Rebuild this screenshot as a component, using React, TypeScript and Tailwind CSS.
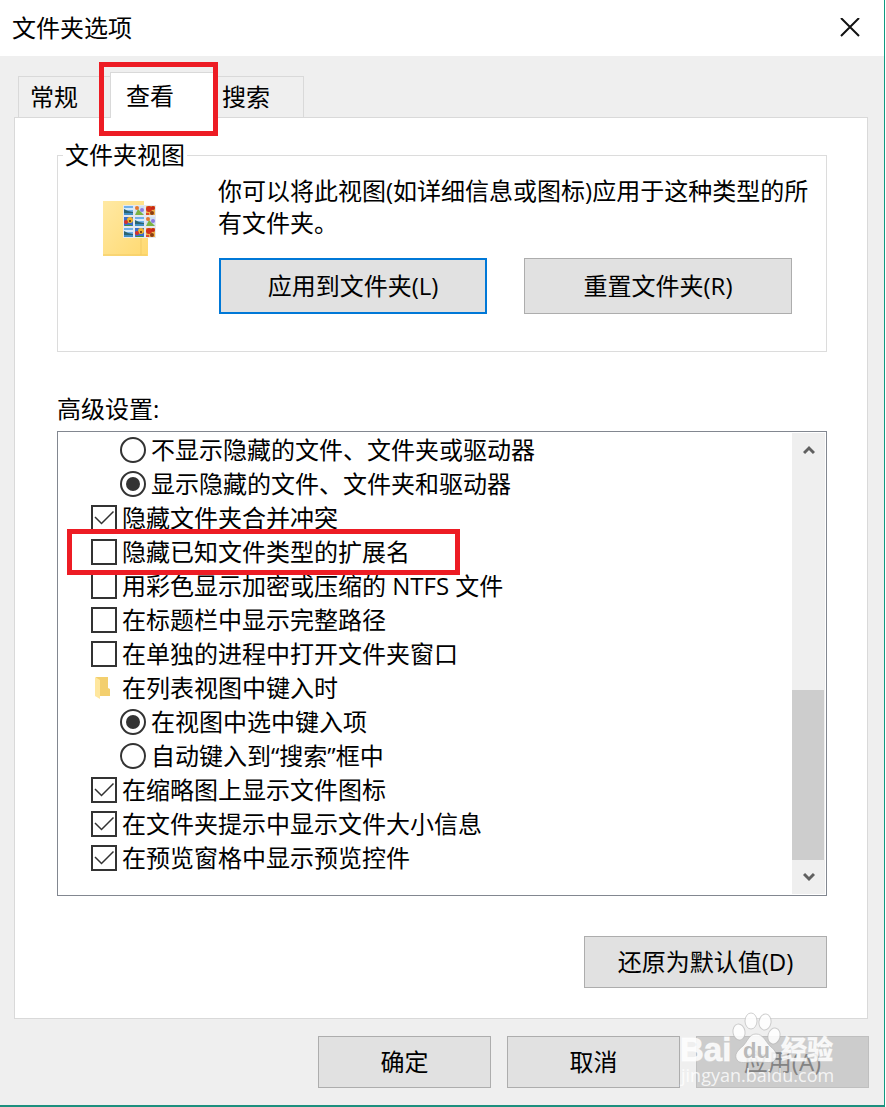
import React from 'react';

type Row = {
  kind: 'radio' | 'checkbox' | 'folder';
  label: string;
  group?: string;
  checked?: boolean;
  marked?: boolean;
};

const rows: Row[] = [
  { kind: 'radio', group: 'hidden-files', label: '不显示隐藏的文件、文件夹或驱动器' },
  { kind: 'radio', group: 'hidden-files', label: '显示隐藏的文件、文件夹和驱动器', checked: true },
  { kind: 'checkbox', label: '隐藏文件夹合并冲突', checked: true },
  { kind: 'checkbox', label: '隐藏已知文件类型的扩展名', marked: true },
  { kind: 'checkbox', label: '用彩色显示加密或压缩的 NTFS 文件' },
  { kind: 'checkbox', label: '在标题栏中显示完整路径' },
  { kind: 'checkbox', label: '在单独的进程中打开文件夹窗口' },
  { kind: 'folder', label: '在列表视图中键入时' },
  { kind: 'radio', group: 'typing', label: '在视图中选中键入项', checked: true },
  { kind: 'radio', group: 'typing', label: '自动键入到“搜索”框中' },
  { kind: 'checkbox', label: '在缩略图上显示文件图标', checked: true },
  { kind: 'checkbox', label: '在文件夹提示中显示文件大小信息', checked: true },
  { kind: 'checkbox', label: '在预览窗格中显示预览控件', checked: true },
];

const SmallFolder = () => (
  <svg width="26" height="26" viewBox="0 0 26 26" aria-hidden="true">
    <path d="M5 2h12v11l2 1v7H7z" fill="#f3cf6e" />
    <path d="M4 2l5 3v19l-5-3z" fill="#ffe79e" />
  </svg>
);

// one thumbnail of the 3x3 grid on the folder
const Thumb = ({ x, y, type }: { x: number; y: number; type: number }) => (
  <g transform={`translate(${x} ${y})`}>
    <rect width="11" height="11" fill="#e6e8ee" />
    {type === 0 && (
      <>
        <rect x="1" y="1" width="9" height="9" fill="#6fb0ea" />
        <path d="M1 3h9v2H1z" fill="#d5eafa" />
        <path d="M1 4l4 2 5 1v1H1z" fill="#2b6472" />
        <path d="M1 8h9v2H1z" fill="#3f8fc4" />
      </>
    )}
    {type === 1 && (
      <>
        <rect x="1" y="1" width="9" height="9" fill="#cfe0f2" />
        <path d="M1 10l3-6 3 3 3 3z" fill="#7cb342" />
        <circle cx="3" cy="3" r="2" fill="#e8762c" />
        <circle cx="8" cy="5" r="2" fill="#8c7ae0" />
      </>
    )}
    {type === 2 && (
      <>
        <rect x="1" y="1" width="9" height="9" fill="#efb04a" />
        <circle cx="4" cy="4" r="3" fill="#d3301c" />
        <circle cx="8" cy="3" r="2" fill="#c62817" />
        <circle cx="7" cy="8" r="2" fill="#8b3d12" />
        <path d="M1 8h3v2H1z" fill="#e0492c" />
      </>
    )}
    {type === 3 && (
      <>
        <rect x="1" y="1" width="9" height="9" fill="#3c6ec9" />
        <circle cx="7" cy="4" r="3" fill="#f0b429" />
        <circle cx="7" cy="5" r="1" fill="#5a2a10" />
        <circle cx="3" cy="6" r="2" fill="#d8322a" />
        <path d="M2 9h7v1H2z" fill="#3f9142" />
      </>
    )}
  </g>
);

const thumbs = [0, 1, 2, 3, 0, 1, 0, 3, 2];

const FolderPicture = () => (
  <svg width="54" height="56" viewBox="0 0 54 56" aria-hidden="true">
    <defs>
      <linearGradient id="folder" x1="0" y1="0" x2="1" y2="1">
        <stop offset="0" stopColor="#ffe9a4" />
        <stop offset="1" stopColor="#ffd970" />
      </linearGradient>
    </defs>
    <path d="M0 1h41v35l4 2v18H0z" fill="url(#folder)" />
    <path d="M38 38v17M0 55h44" stroke="#f3cb62" strokeWidth="1" fill="none" />
    {thumbs.map((type, i) => (
      <Thumb key={i} x={20 + (i % 3) * 11} y={5 + Math.floor(i / 3) * 11} type={type} />
    ))}
  </svg>
);

const Watermark = () => (
  <svg
    className="pointer-events-none absolute right-11 bottom-4 h-22 w-[164px] font-['Open_Sans','Noto_Sans_CJK_SC',sans-serif]"
    viewBox="0 0 164 88"
    aria-hidden="true"
  >
    <g fill="#ffffff" fillOpacity="0.85" stroke="#b0b0b0" strokeOpacity="0.6" strokeWidth="1">
      <ellipse cx="63" cy="31" rx="6" ry="8" transform="rotate(-10 63 31)" />
      <ellipse cx="75" cy="20" rx="6" ry="8" />
      <ellipse cx="89" cy="21" rx="6" ry="8" transform="rotate(8 89 21)" />
      <ellipse cx="98" cy="35" rx="6" ry="8" transform="rotate(15 98 35)" />
      <path d="M80 33c7 0 9 7 14 12 6 5 8 9 5 14-3 4-8 2-19 2s-16 2-19-2c-3-5 0-9 6-14 5-5 6-12 13-12z" />
    </g>
    <g fill="#ffffff" fillOpacity="0.85" stroke="#ffffff" strokeOpacity="0.6" strokeWidth="1">
      <text x="4" y="60" fontSize="33" fontWeight="700" fontFamily="Liberation Sans">Bai</text>
      <text x="105" y="58" fontSize="26" fontWeight="700">经验</text>
    </g>
    <text x="67" y="57" fontSize="22" fontWeight="700" fill="#b9b9b9" fontFamily="Liberation Sans">du</text>
    <text x="5" y="81" fontSize="18" fill="#ffffff" fillOpacity="0.8">jingyan.baidu.com</text>
  </svg>
);

const SettingRow: React.FC<{ row: Row }> = ({ row }) => {
  if (row.kind === 'folder') {
    return (
      <li className="flex h-[34px] items-center gap-[5px] pl-[33px]">
        <SmallFolder />
        <span>{row.label}</span>
      </li>
    );
  }

  if (row.kind === 'radio') {
    return (
      <li className="flex h-[34px] items-center pl-[62px]">
        <label className="flex items-center gap-[5px]">
          <input
            type="radio"
            name={row.group}
            defaultChecked={row.checked}
            className="size-[26px] shrink-0 appearance-none rounded-full border-2 border-[#333333] bg-clip-content p-1 checked:bg-[#333333]"
          />
          {row.label}
        </label>
      </li>
    );
  }

  return (
    <li className="relative flex h-[34px] items-center pl-[33px]">
      <label className="flex items-center gap-[5px]">
        <span className="relative size-[26px] shrink-0">
          <input
            type="checkbox"
            defaultChecked={row.checked}
            className="peer block size-[26px] appearance-none border-2 border-[#333333] bg-white"
          />
          <svg
            className="pointer-events-none absolute inset-0 hidden peer-checked:block"
            width="26"
            height="26"
            viewBox="0 0 26 26"
            fill="none"
          >
            <path d="M4 12l6.500 6.500L22.500 6.500" stroke="#333333" strokeWidth="1.500" />
          </svg>
        </span>
        {row.label}
      </label>
      {row.marked && (
        <div className="pointer-events-none absolute -inset-y-1.5 left-[9px] z-10 w-[393px] border-5 border-[#ed1c24]" />
      )}
    </li>
  );
};

const App = () => {
  const button = 'border border-[#adadad] bg-[#e1e1e1] text-center';

  return (
    <div className="bg-white pr-px font-['Open_Sans','Noto_Sans_CJK_SC',sans-serif] text-2xl leading-8 text-black">
      <div className="relative flex min-h-screen flex-col border-r border-b-2 border-r-[#0f9980] border-b-[#1c8f7e] bg-[#efefef]">
        <header className="flex h-14 items-center justify-between bg-white pr-6 pl-3">
          <h1>文件夹选项</h1>
          <button type="button" aria-label="关闭">
            <svg width="20" height="20" viewBox="0 0 20 20" fill="none" stroke="#111111" strokeWidth="2">
              <path d="M1 0l18 18M19 0L1 18" />
            </svg>
          </button>
        </header>

        <main className="flex flex-1 flex-col pt-4 pr-[15px] pl-3.5">
          <div role="tablist" className="flex items-end pl-1">
            <button type="button" role="tab" aria-selected="false" className="h-[41px] w-[92px] border-t border-l border-[#d9d9d9] pl-[11px] text-left">
              常规
            </button>
            <div className="relative z-10 -mb-px">
              <button type="button" role="tab" aria-selected="true" className="h-[46px] w-[104px] border-t border-l border-[#d9d9d9] bg-white pl-[15px] text-left">
                查看
              </button>
              <div className="pointer-events-none absolute -top-2.5 -left-[11px] h-[74px] w-[119px] border-5 border-[#ed1c24]" />
            </div>
            <button type="button" role="tab" aria-selected="false" className="h-[41px] w-[90px] border-t border-r border-[#d9d9d9] pl-2 text-left">
              搜索
            </button>
          </div>

          <section className="mr-px border border-[#d9d9d9] bg-white pt-5 pr-10 pb-[30px] pl-[42px]">
            <fieldset className="flex border border-[#dcdcdc] pb-[37px] pl-[45px]">
              <legend className="-ml-10 px-0.5 leading-[34px]">文件夹视图</legend>
              <div className="flex flex-1">
                <div className="w-[115px] shrink-0 pt-7">
                  <FolderPicture />
                </div>
                <div className="flex-1 pt-[3px]">
                  <p className="pr-2">你可以将此视图(如详细信息或图标)应用于这种类型的所有文件夹。</p>
                  <div className="mt-[19px] flex justify-between pr-[34px] pl-px">
                    <button type="button" className="h-14 w-[268px] border-2 border-[#0078d7] bg-[#e1e1e1]">
                      应用到文件夹(L)
                    </button>
                    <button type="button" className={`${button} h-14 w-[268px]`}>
                      重置文件夹(R)
                    </button>
                  </div>
                </div>
              </div>
            </fieldset>

            <h2 id="advanced" className="mt-[41px]">高级设置:</h2>
            <div className="mt-1.5 flex border border-[#828790] p-px">
              <ul aria-labelledby="advanced" className="-ml-px flex-1 pb-[19px]">
                {rows.map((row) => (
                  <SettingRow key={row.label} row={row} />
                ))}
              </ul>
              <div className="flex w-[33px] flex-col bg-[#efefef]">
                <button type="button" aria-label="向上滚动" className="flex h-[34px] items-center justify-center">
                  <svg width="12" height="10" viewBox="0 0 12 10" fill="none" stroke="#606060" strokeWidth="3">
                    <path d="M1 8l5-5 5 5" />
                  </svg>
                </button>
                <div className="flex flex-1 flex-col justify-end">
                  <div className="mr-px h-[170px] bg-[#cdcdcd]" />
                </div>
                <button type="button" aria-label="向下滚动" className="flex h-[34px] items-center justify-center">
                  <svg width="12" height="10" viewBox="0 0 12 10" fill="none" stroke="#606060" strokeWidth="3">
                    <path d="M1 2l5 5 5-5" />
                  </svg>
                </button>
              </div>
            </div>

            <div className="mt-10 flex justify-end">
              <button type="button" className={`${button} h-[52px] w-[243px]`}>
                还原为默认值(D)
              </button>
            </div>
          </section>

          <footer className="flex justify-end gap-4 py-[17px]">
            <button type="button" className={`${button} h-[52px] w-[173px]`}>确定</button>
            <button type="button" className={`${button} h-[52px] w-[173px]`}>取消</button>
            <button type="button" disabled className="h-[52px] w-[173px] border border-[#bfbfbf] bg-[#cccccc] text-[#838383]">
              应用(A)
            </button>
          </footer>
        </main>

        <Watermark />
      </div>
    </div>
  );
};

export default App;
